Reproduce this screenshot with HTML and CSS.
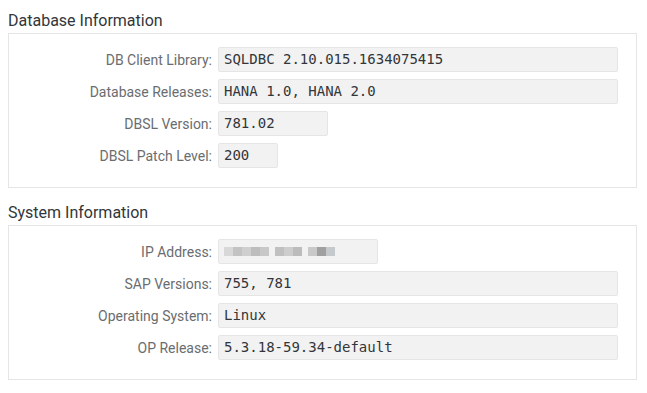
FILE: index.html
```html
<!DOCTYPE html>
<html lang="en">
<head>
    <meta charset="UTF-8">
    <meta name="viewport" content="width=device-width, initial-scale=1.0">
    <title>Database and System Information</title>
    <link rel="stylesheet" href="styles.css">
</head>
<body>
    <div class="section">
        <h2 class="section-title">Database Information</h2>
        <div class="panel">
            <div class="form">
                <label class="form-label">DB Client Library:</label>
                <div class="field field-full">SQLDBC 2.10.015.1634075415</div>

                <label class="form-label">Database Releases:</label>
                <div class="field field-full">HANA 1.0, HANA 2.0</div>

                <label class="form-label">DBSL Version:</label>
                <div class="field field-m">781.02</div>

                <label class="form-label">DBSL Patch Level:</label>
                <div class="field field-s">200</div>
            </div>
        </div>
    </div>

    <div class="section">
        <h2 class="section-title">System Information</h2>
        <div class="panel">
            <div class="form">
                <label class="form-label">IP Address:</label>
                <div class="field field-ip">
                    <span class="blur">
                        <i style="background:#d8d8d8"></i><i style="background:#c3c3c3"></i><i style="background:#cfcfcf"></i><i style="background:#bdbdbd"></i><i style="background:#c8c8c8"></i>
                        <i class="space"></i>
                        <i style="background:#c0c0c0"></i><i style="background:#cdcdcd"></i><i style="background:#bcbcbc"></i>
                        <i class="space"></i>
                        <i style="background:#c9c9c9"></i><i style="background:#a0a0a0"></i><i style="background:#c5c9cc"></i>
                    </span>
                </div>

                <label class="form-label">SAP Versions:</label>
                <div class="field field-full">755, 781</div>

                <label class="form-label">Operating System:</label>
                <div class="field field-full">Linux</div>

                <label class="form-label">OP Release:</label>
                <div class="field field-full">5.3.18-59.34-default</div>
            </div>
        </div>
    </div>
</body>
</html>
```

FILE: styles.css
```css
* {
    margin: 0;
    padding: 0;
    box-sizing: border-box;
}

body {
    font-family: Roboto, "Noto Sans", sans-serif;
    background: #ffffff;
    color: #32363a;
    padding: 8px 10px 0 8px;
}

.section + .section {
    margin-top: 12px;
}

.section-title {
    font-size: 16px;
    font-weight: normal;
    line-height: 25px;
    color: #32363a;
}

.panel {
    border: 1px solid #e5e5e5;
    padding: 13px 0 19px 0;
}

.form {
    display: grid;
    grid-template-columns: 203px auto;
    column-gap: 6px;
    row-gap: 7px;
    align-items: center;
    justify-items: start;
}

.form-label {
    justify-self: end;
    font-size: 14px;
    color: #6a6d70;
}

.field {
    height: 25px;
    line-height: 22px;
    padding: 0 5px;
    background: #f2f2f2;
    border: 1px solid #e5e5e5;
    border-radius: 2px;
    font-family: "DejaVu Sans Mono", monospace;
    font-size: 14px;
    color: #32363a;
    white-space: nowrap;
}

.field-full { width: 400px; }
.field-m { width: 110px; }
.field-s { width: 60px; }
.field-ip { width: 160px; }

.blur {
    display: flex;
    align-items: center;
    height: 23px;
}

.blur i {
    display: block;
    width: 9px;
    height: 9px;
}

.blur i.space {
    width: 6px;
    background: transparent;
}
```
